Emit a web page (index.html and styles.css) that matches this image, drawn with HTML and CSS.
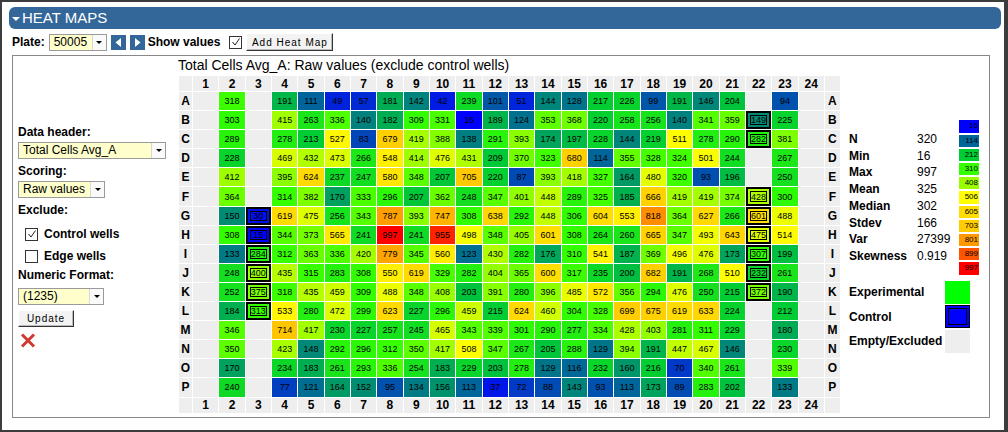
FILE: index.html
```html
<!DOCTYPE html>
<html>
<head>
<meta charset="utf-8">
<title>Heat Maps</title>
<link rel="stylesheet" href="styles.css">
</head>
<body>
<div class="page">
  <div class="titlebar"><span class="caret"></span><span>HEAT MAPS</span></div>
  <div class="toolbar">
    <span class="lbl">Plate:</span>
    <div class="select sel-plate"><span class="sel-val">50005</span><span class="sel-arrow"></span></div>
    <span class="navbtn nav-prev"><svg width="15" height="15" viewBox="0 0 15 15"><polygon points="10,3 10,12 4.5,7.5" fill="#fff"/></svg></span>
    <span class="navbtn nav-next"><svg width="15" height="15" viewBox="0 0 15 15"><polygon points="5,3 5,12 10.5,7.5" fill="#fff"/></svg></span>
    <span class="lbl show-lbl">Show values</span>
    <span class="checkbox cb-show"><svg width="10" height="10" viewBox="0 0 10 10"><polyline points="1.5,5 4,8 8.5,1.5" fill="none" stroke="#222" stroke-width="1"/></svg></span>
    <span class="btn btn-add">Add Heat Map</span>
  </div>
  <div class="panel">
    <div class="controls">
      <div class="lbl clabel">Data header:</div>
      <div class="select sel-header"><span class="sel-val">Total Cells Avg_A</span><span class="sel-arrow"></span></div>
      <div class="lbl clabel">Scoring:</div>
      <div class="select sel-scoring"><span class="sel-val">Raw values</span><span class="sel-arrow"></span></div>
      <div class="lbl clabel">Exclude:</div>
      <div class="cbrow cb-first"><span class="checkbox"><svg width="10" height="10" viewBox="0 0 10 10"><polyline points="1.5,5 4,8 8.5,1.5" fill="none" stroke="#222" stroke-width="1"/></svg></span><span class="lbl">Control wells</span></div>
      <div class="cbrow"><span class="checkbox"></span><span class="lbl">Edge wells</span></div>
      <div class="lbl clabel numfmt">Numeric Format:</div>
      <div class="select sel-format"><span class="sel-val">(1235)</span><span class="sel-arrow"></span></div>
      <span class="btn btn-update">Update</span>
      <div class="remove"><svg width="16" height="15" viewBox="0 0 16 15"><path d="M2 1.5 L14 13.5 M14 1.5 L2 13.5" stroke="#d23a30" stroke-width="3" stroke-linecap="butt"/></svg></div>
    </div>
    <div class="center">
      <div class="maptitle">Total Cells Avg_A: Raw values (exclude control wells)</div>
      <div class="grid" id="grid"></div>
    </div>
    <div class="side">
      <div class="statwrap">
        <table class="stats">
          <tr><th>N</th><td>320</td></tr>
          <tr><th>Min</th><td>16</td></tr>
          <tr><th>Max</th><td>997</td></tr>
          <tr><th>Mean</th><td>325</td></tr>
          <tr><th>Median</th><td>302</td></tr>
          <tr><th>Stdev</th><td>166</td></tr>
          <tr><th>Var</th><td>27399</td></tr>
          <tr><th>Skewness</th><td>0.919</td></tr>
        </table>
        <div class="scale">
          <div class="sw s0">16</div>
          <div class="sw s1">114</div>
          <div class="sw s2">212</div>
          <div class="sw s3">310</div>
          <div class="sw s4">408</div>
          <div class="sw s5">506</div>
          <div class="sw s6">605</div>
          <div class="sw s7">703</div>
          <div class="sw s8">801</div>
          <div class="sw s9">899</div>
          <div class="sw s10">997</div>
        </div>
      </div>
      <div class="legend">
        <div class="lrow"><span class="lbl">Experimental</span><span class="lbox lb-exp"></span></div>
        <div class="lrow"><span class="lbl">Control</span><span class="lbox lb-ctrl"></span></div>
        <div class="lrow"><span class="lbl">Empty/Excluded</span><span class="lbox lb-empty"></span></div>
      </div>
    </div>
  </div>
</div>
<script src="script.js"></script>
</body>
</html>
```

FILE: styles.css
```css
* { box-sizing: border-box; }
html, body { margin: 0; padding: 0; }
body {
  background: #3c3c3c;
  width: 1008px;
  height: 432px;
  overflow: hidden;
  font-family: "Liberation Sans", Arial, sans-serif;
  font-size: 12px;
  color: #000;
}
.page {
  margin: 2px 4px 2px 2px;
  height: 428px;
  background: #fff;
  padding: 5px 3px 0 7px;
}
.titlebar {
  height: 22px;
  background: #336699;
  border-radius: 6px;
  color: #fff;
  font-size: 15px;
  line-height: 22px;
  display: flex;
  align-items: center;
  padding-left: 3px;
}
.caret {
  width: 0;
  height: 0;
  border-left: 4px solid transparent;
  border-right: 4px solid transparent;
  border-top: 4px solid #fff;
  margin: 2px 2px 0 0;
}
.lbl { font-weight: bold; white-space: nowrap; }
.toolbar {
  display: flex;
  align-items: center;
  height: 18px;
  margin: 4px 0 4px 3px;
}
.select {
  display: flex;
  height: 17px;
  border: 1px solid #9a9a9a;
  background: #ffffcc;
}
.sel-val {
  flex: 1;
  padding-left: 4px;
  line-height: 15px;
  white-space: nowrap;
  overflow: hidden;
}
.sel-arrow {
  width: 14px;
  background: #fafafa;
  border-left: 1px solid #d8d8d8;
  display: flex;
  align-items: center;
  justify-content: center;
}
.sel-arrow::after {
  content: "";
  border-left: 3px solid transparent;
  border-right: 3px solid transparent;
  border-top: 3px solid #000;
}
.sel-plate { width: 58px; margin-left: 4px; }
.navbtn {
  width: 15px;
  height: 15px;
  background: #336699;
  display: block;
}
.navbtn svg { display: block; }
.nav-prev { margin-left: 4px; }
.nav-next { margin-left: 4px; }
.show-lbl { margin-left: 3px; }
.checkbox {
  width: 13px;
  height: 13px;
  border: 1px solid #333;
  background: #fff;
  display: flex;
  align-items: center;
  justify-content: center;
  flex: none;
}
.checkbox svg { display: block; }
.cb-show { margin-left: 9px; }
.btn {
  display: flex;
  align-items: center;
  justify-content: center;
  background: #f3f3f3;
  border-top: 1px solid #fff;
  border-left: 1px solid #fff;
  border-right: 1px solid #333;
  border-bottom: 1px solid #333;
  box-shadow: inset -1px -1px 0 #bbb;
  font-size: 10px;
  letter-spacing: 1px;
}
.btn-add { width: 87px; height: 18px; margin-left: 4px; }
.panel {
  margin: 0 11px 0 3px;
  height: 363px;
  border: 1px solid #888;
  display: flex;
  align-items: center;
}
.controls {
  width: 165px;
  padding-left: 5px;
  display: flex;
  flex-direction: column;
  align-items: flex-start;
}
.clabel { line-height: 14px; }
.sel-header { width: 148px; margin: 3px 0 5px; }
.sel-scoring { width: 87px; margin: 3px 0 5px; }
.sel-format { width: 86px; margin: 6px 0 5px; }
.cbrow {
  display: flex;
  align-items: center;
  gap: 6px;
  padding-left: 7px;
  height: 22px;
}
.cb-first { margin-top: 6px; }
.numfmt { margin-top: 1px; }
.btn-update { width: 56px; height: 17px; }
.remove { margin: 6px 0 0 2px; }
.remove svg { display: block; }
.center {
  width: 662px;
  align-self: flex-start;
  padding-top: 1px;
}
.maptitle {
  font-size: 14px;
  line-height: 17px;
  white-space: nowrap;
}
.grid {
  margin: 2px 0 0 1px;
  display: grid;
  grid-template-columns: 13px repeat(24, 25.33px) 15px;
  grid-template-rows: 15px repeat(16, 18.1px) 15px;
  gap: 1px;
  background: #fff;
}
.grid > div {
  display: flex;
  align-items: center;
  justify-content: center;
}
.hd, .rl {
  background: #eeeeee;
  font-weight: bold;
  font-size: 12px;
}
.cell {
  font-size: 9px;
  color: #000;
}
.cell.empty { background: #eeeeee; }
.cell.ctrl {
  box-shadow: inset 0 0 0 2px #000, inset 0 0 0 4px var(--c), inset 0 0 0 5px #000;
}
.side {
  width: 131px;
  margin-left: 9px;
  display: flex;
  flex-direction: column;
}
.statwrap {
  display: flex;
  align-items: center;
  justify-content: space-between;
}
.stats { border-collapse: collapse; }
.stats th, .stats td {
  padding: 0;
  height: 16.7px;
  font-size: 12px;
  text-align: left;
  vertical-align: middle;
}
.stats th { width: 68px; font-weight: bold; }
.stats td { font-weight: normal; }
.scale {
  display: flex;
  flex-direction: column;
  gap: 2px;
  margin-right: 1px;
}
.sw {
  width: 20px;
  height: 12.2px;
  font-size: 8px;
  line-height: 12px;
  text-align: right;
  padding-right: 1px;
}
.s0 { background: rgb(0,0,255); }
.s1 { background: rgb(0,102,153); }
.s2 { background: rgb(0,204,51); }
.s3 { background: rgb(51,255,0); }
.s4 { background: rgb(153,255,0); }
.s5 { background: rgb(255,255,0); }
.s6 { background: rgb(255,221,0); }
.s7 { background: rgb(255,204,0); }
.s8 { background: rgb(255,153,0); }
.s9 { background: rgb(255,85,0); }
.s10 { background: rgb(255,0,0); }
.legend {
  margin-top: 6px;
  display: flex;
  flex-direction: column;
  gap: 1.5px;
}
.lrow {
  display: flex;
  align-items: center;
}
.lrow .lbl { width: 96px; }
.lbox { width: 25px; height: 23px; display: block; }
.lb-exp { background: #00ff00; }
.lb-ctrl {
  background: #0000ff;
  border: 1px solid #000;
  box-shadow: inset 0 0 0 2px #0000ff, inset 0 0 0 3px #000;
}
.lb-empty { background: #eeeeee; }
```

FILE: script.js
```js
(function () {
  var rows = "ABCDEFGHIJKLMNOP";
  var data = [
    "_ 318 _ 191 111 49 57 181 142 42 239 101 51 144 128 217 226 99 191 146 204 _ 94 _",
    "_ 303 _ 415 263 336 140 182 309 331 16 189 124 353 368 220 258 256 140 341 359 149c 225 _",
    "_ 289 _ 278 213 527 83 679 419 388 138 291 393 174 197 228 144 219 511 278 290 282c 381 _",
    "_ 228 _ 469 432 473 266 548 414 476 431 209 370 323 680 114 355 328 324 501 244 _ 267 _",
    "_ 412 _ 395 624 237 247 580 348 207 705 220 87 393 418 327 164 480 320 93 196 _ 250 _",
    "_ 364 _ 314 382 170 333 296 207 362 248 347 401 448 289 325 185 666 419 419 374 428c 300 _",
    "_ 150 30c 619 475 256 343 787 393 747 308 638 292 448 306 604 553 818 364 627 266 601c 488 _",
    "_ 308 15c 344 373 565 241 997 241 955 498 348 405 601 308 264 260 665 347 493 643 475c 514 _",
    "_ 133 284c 312 363 336 420 779 345 560 123 430 282 176 310 541 187 369 496 476 173 307c 199 _",
    "_ 248 400c 435 315 283 308 550 619 329 282 404 365 600 317 235 200 682 191 268 510 232c 261 _",
    "_ 252 375c 318 435 459 309 488 348 408 203 391 280 396 485 572 356 294 476 250 215 372c 190 _",
    "_ 184 313c 533 280 472 299 623 227 296 459 215 624 460 304 328 699 675 619 633 224 _ 212 _",
    "_ 346 _ 714 417 230 227 257 245 465 343 339 301 290 277 334 428 403 281 311 229 _ 180 _",
    "_ 350 _ 423 148 292 296 312 350 417 508 347 267 205 288 129 394 191 447 467 146 _ 230 _",
    "_ 170 _ 234 183 261 293 336 254 183 229 203 278 129 116 232 160 216 70 340 261 _ 339 _",
    "_ 240 _ 77 121 164 152 95 134 156 113 37 72 88 143 93 113 173 89 283 202 _ 133 _"
  ];
  var stops = [
    [0, 0, 255], [0, 102, 153], [0, 204, 51], [51, 255, 0], [153, 255, 0],
    [255, 255, 0], [255, 221, 0], [255, 204, 0], [255, 153, 0], [255, 85, 0], [255, 0, 0]
  ];
  var min = 16, max = 997;
  function color(v) {
    var t = (v - min) / (max - min) * 10;
    if (t < 0) t = 0;
    if (t > 10) t = 10;
    var i = Math.min(9, Math.floor(t));
    var f = t - i;
    var a = stops[i], b = stops[i + 1];
    var c = [0, 1, 2].map(function (k) { return Math.round(a[k] + (b[k] - a[k]) * f); });
    return "rgb(" + c.join(",") + ")";
  }
  var grid = document.getElementById("grid");
  function add(cls, text) {
    var d = document.createElement("div");
    d.className = cls;
    if (text !== undefined) d.textContent = text;
    grid.appendChild(d);
    return d;
  }
  function header() {
    add("hd corner");
    for (var c = 1; c <= 24; c++) add("hd", String(c));
    add("hd corner");
  }
  header();
  for (var r = 0; r < 16; r++) {
    var vals = data[r].split(" ");
    add("rl", rows[r]);
    for (var c = 0; c < 24; c++) {
      var s = vals[c];
      if (s === "_") {
        add("cell empty");
      } else {
        var ctrl = s.slice(-1) === "c";
        var v = parseInt(s, 10);
        var col = color(v);
        var d = add(ctrl ? "cell ctrl" : "cell", String(v));
        d.style.background = col;
        if (ctrl) d.style.setProperty("--c", col);
      }
    }
    add("rl", rows[r]);
  }
  header();
})();
```
